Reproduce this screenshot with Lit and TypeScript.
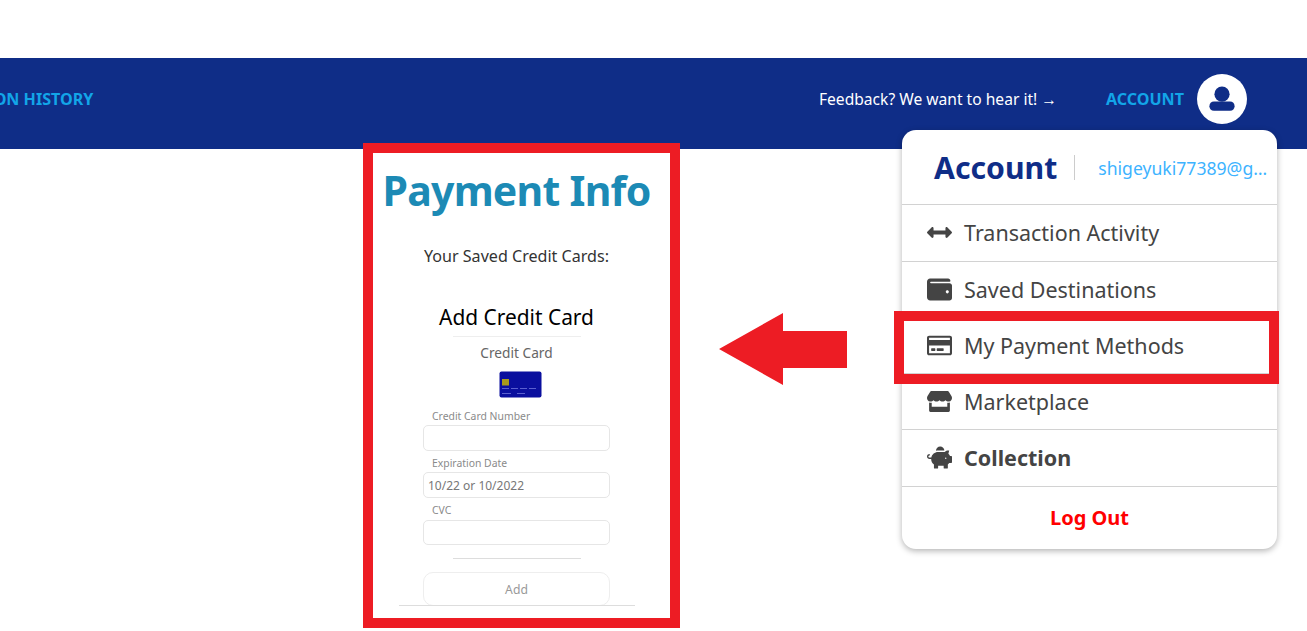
import { LitElement, html, css, svg } from "lit";
import { customElement } from "lit/decorators.js";

const icons: Record<string, { vb: string; d: string }> = {
  arrows: { vb: "0 0 512 512", d: "M377.941 169.941V216H134.059v-46.059c0-21.382-25.851-32.09-40.971-16.971L7.029 239.029c-9.373 9.373-9.373 24.568 0 33.941l86.059 86.059c15.119 15.119 40.971 4.411 40.971-16.971V296h243.882v46.059c0 21.382 25.851 32.09 40.971 16.971l86.059-86.059c9.373-9.373 9.373-24.568 0-33.941l-86.059-86.059c-15.119-15.12-40.971-4.412-40.971 16.97z" },
  wallet: { vb: "0 0 512 512", d: "M461.2 128H80c-8.84 0-16-7.16-16-16s7.16-16 16-16h384c8.84 0 16-7.16 16-16 0-26.51-21.49-48-48-48H64C28.65 32 0 60.65 0 96v320c0 35.35 28.65 64 64 64h397.2c28.02 0 50.8-21.53 50.8-48V176c0-26.47-22.78-48-50.8-48zM416 336c-17.67 0-32-14.33-32-32s14.33-32 32-32 32 14.33 32 32-14.33 32-32 32z" },
  card: { vb: "0 0 576 512", d: "M527.9 32H48.1C21.5 32 0 53.5 0 80v352c0 26.5 21.5 48 48.1 48h479.8c26.6 0 48.1-21.5 48.1-48V80c0-26.5-21.5-48-48.1-48zM54.1 80h467.8c3.3 0 6 2.7 6 6v42H48.1V86c0-3.3 2.7-6 6-6zm467.8 352H54.1c-3.3 0-6-2.7-6-6V256h479.8v170c0 3.3-2.7 6-6 6zM192 332v40c0 6.6-5.4 12-12 12h-72c-6.6 0-12-5.4-12-12v-40c0-6.6 5.4-12 12-12h72c6.6 0 12 5.4 12 12zm192 0v40c0 6.6-5.4 12-12 12H236c-6.6 0-12-5.4-12-12v-40c0-6.6 5.4-12 12-12h136c6.6 0 12 5.4 12 12z" },
  store: { vb: "0 0 616 512", d: "M602 118.6L537.1 15C531.3 5.7 521 0 510 0H106C95 0 84.7 5.7 78.9 15L14 118.6C-19.5 172.1 10.2 246.5 72.8 255c4.5.6 9.1.9 13.7.9 29.6 0 55.8-13 73.8-33.1 18 20.1 44.3 33.1 73.8 33.1 29.6 0 55.8-13 73.8-33.1 18 20.1 44.3 33.1 73.8 33.1 29.6 0 55.8-13 73.8-33.1 18.1 20.1 44.3 33.1 73.8 33.1 4.7 0 9.2-.3 13.7-.9 62.8-8.4 92.6-82.8 59-136.4zM529.5 288c-10 0-19.9-1.5-29.5-3.8V384H116v-99.8c-9.6 2.2-19.5 3.8-29.5 3.8-6 0-12.1-.4-18-1.2-5.6-.8-11.1-2.1-16.4-3.6V480c0 17.7 14.3 32 32 32h448c17.7 0 32-14.3 32-32V283.2c-5.4 1.6-10.8 2.9-16.4 3.6-6.1.8-12.1 1.2-18.2 1.2z" },
  piggy: { vb: "0 0 576 512", d: "M560 224h-29.5c-8.8-20-21.6-37.7-37.4-52.5L512 96h-32c-29.4 0-55.4 13.5-73 34.3-7.6-1.1-15.1-2.3-23-2.3H256c-77.4 0-141.9 55-156.8 128H56c-14.8 0-26.5-13.5-23.5-28.8C34.7 215.8 45.4 208 57 208h1c3.3 0 6-2.7 6-6v-20c0-3.3-2.7-6-6-6-28.5 0-53.9 20.4-57.5 48.6C-3.9 258.8 22.7 288 56 288h40c0 52.2 25.4 98.1 64 127.3V496c0 8.8 7.2 16 16 16h64c8.8 0 16-7.2 16-16v-48h128v48c0 8.8 7.2 16 16 16h64c8.8 0 16-7.2 16-16v-80.7c11.8-8.9 22.3-19.4 31.3-31.3H560c8.8 0 16-7.2 16-16V240c0-8.8-7.2-16-16-16zm-128 64c-8.8 0-16-7.2-16-16s7.2-16 16-16 16 7.2 16 16-7.2 16-16 16zM256 96h128c5.4 0 10.7.4 15.9.8 0-.3.1-.5.1-.8 0-53-43-96-96-96s-96 43-96 96c0 2.1.5 4.1.6 6.2 15.2-3.9 31-6.2 47.4-6.2z" },
};

const icon = (name: string) => html`<svg class="ico" viewBox=${icons[name].vb} aria-hidden="true"><path d=${icons[name].d}></path></svg>`;

const rows = [
  { i: "arrows", t: "Transaction Activity" },
  { i: "wallet", t: "Saved Destinations" },
  { i: "card", t: "My Payment Methods" },
  { i: "store", t: "Marketplace" },
  { i: "piggy", t: "Collection", bold: true },
];

@customElement("app-root")
export class AppRoot extends LitElement {
  static styles = css`
    :host {
      display: block;
      position: relative;
      width: 100%;
      height: 631px;
      overflow: hidden;
      background: #fff;
      font-family: "Noto Sans", "Open Sans", sans-serif;
      color: #3d3d3d;
    }
    .top { height: 58px; }
    .nav {
      box-sizing: border-box;
      height: 91px;
      background: #0f2d87;
      display: flex;
      align-items: center;
      padding: 0 60px 10px 0;
    }
    .hist {
      margin-left: -96px;
      margin-right: auto;
      font-size: 16.1px;
      font-weight: 700;
      color: #12a5e8;
      white-space: nowrap;
    }
    .feedback { color: #fff; font-size: 15.6px; margin-right: 49px; white-space: nowrap; }
    .acct { color: #12a5e8; font-size: 16.1px; font-weight: 700; margin-right: 13px; }
    .avatar {
      width: 50px; height: 50px; border-radius: 50%; background: #fff;
      display: flex; align-items: center; justify-content: center;
    }
    .avatar svg { width: 26px; height: 26px; fill: #0f2d87; }
    .main { display: flex; padding-left: 363px; margin-top: -6px; position: relative; }
    .pay {
      box-sizing: border-box;
      width: 317px; height: 485px;
      border: 10px solid #ed1c24;
      background: #fff;
      display: flex; flex-direction: column; align-items: center;
      padding-right: 10px;
      position: relative;
    }
    h1 {
      margin: 10px 0 0; font-size: 41px; line-height: 54px; font-weight: 700; color: #1c8ab5;
      white-space: nowrap; letter-spacing: -0.75px; font-family: "Noto Sans", sans-serif;
    }
    .saved { margin-top: 28px; font-size: 16.1px; line-height: 22px; color: #333; }
    .addt { margin-top: 35px; font-size: 20.9px; line-height: 30px; color: #000; }
    .rule { width: 128px; height: 1px; background: #eee; margin-top: 4px; flex: none; }
    .cc { margin-top: 6px; font-size: 13.7px; line-height: 20px; color: #666; }
    .cardimg { margin: 8px 0 0 8px; width: 43px; height: 27px; flex: none; display: block; }
    .field { width: 187px; display: flex; flex-direction: column; }
    .field label { font-size: 10.4px; line-height: 14px; color: #8a8a8a; padding-left: 9px; margin-bottom: 2px; }
    .input {
      box-sizing: border-box; height: 26px;
      border: 1px solid #e6e6e6; border-radius: 5px;
      font-size: 12px; line-height: 25px; color: #777; padding-left: 4px;
    }
    .f1 { margin-top: 11px; }
    .f2, .f3 { margin-top: 5px; }
    .f3 .input { height: 25px; }
    .f3 label { margin-bottom: 3px; }
    .rule2 { width: 128px; height: 1px; background: #ddd; margin-top: 13px; flex: none; }
    .add {
      box-sizing: border-box; width: 187px; height: 34px; margin-top: 13px; flex: none;
      border: 1px solid #eee; border-radius: 10px;
      display: flex; align-items: center; justify-content: center;
      font-size: 12.2px; color: #999;
    }
    .rule3 { width: 236px; height: 1px; background: #ddd; margin-top: -1px; flex: none; }

    .menu {
      position: absolute; left: 902px; top: 130px; width: 375px; height: 419px;
      box-sizing: border-box;
      background: #fff; border-radius: 14px;
      box-shadow: 0 2px 6px rgba(0,0,0,.3);
      display: flex; flex-direction: column;
    }
    .mh { height: 74px; flex: none; display: flex; align-items: center; box-sizing: border-box; padding-left: 32px; }
    .mh b { font-size: 30.2px; font-weight: 700; color: #0f2d87; white-space: nowrap; }
    .sep { width: 1px; height: 25px; background: #ccc; margin: 0 23px 0 17px; flex: none; }
    .mail {
      color: #3db3ff; font-size: 17.6px; min-width: 0; flex: 1; margin-right: 7px; padding-top: 2px;
      white-space: nowrap; overflow: hidden; text-overflow: ellipsis;
    }
    .row {
      box-sizing: border-box; height: 56px; flex: none;
      border-top: 1px solid #d2d2d2;
      display: flex; align-items: center; padding-left: 25px;
      font-size: 21.5px; color: #444; white-space: nowrap;
    }
    .mh + .row, .row.bold { height: 57px; padding-bottom: 1px; }
    .row.bold { font-weight: 700; }
    .ico { width: 25px; height: 25px; fill: #444; flex: none; margin-right: 12px; }
    .out {
      flex: 1; border-top: 1px solid #d2d2d2; padding-bottom: 1px;
      display: flex; align-items: center; justify-content: center;
      color: #f00; font-weight: 700; font-size: 20px;
    }
    .hl {
      position: absolute; left: 894px; top: 311px; width: 385px; height: 73px;
      box-sizing: border-box; border: 10px solid #ed1c24; pointer-events: none;
    }
    .arrow { position: absolute; left: 719px; top: 313px; width: 128px; height: 72px; fill: #ed1c24; }
  `;

  render() {
    return html`
      <div class="top"></div>
      <nav class="nav">
        <span class="hist">TRANSACTION HISTORY</span>
        <span class="feedback">Feedback? We want to hear it! →</span>
        <span class="acct">ACCOUNT</span>
        <span class="avatar">
          <svg viewBox="0 0 26 26"><circle cx="13" cy="8.2" r="7.6"></circle><path d="M5 15.6h16c2.8 0 4.6 2 4.6 4.6 0 2.6-1.8 4.6-4.6 4.6H5c-2.8 0-4.6-2-4.6-4.6 0-2.6 1.8-4.6 4.6-4.6z"></path></svg>
        </span>
      </nav>
      <div class="main">
        <section class="pay">
          <h1>Payment Info</h1>
          <div class="saved">Your Saved Credit Cards:</div>
          <div class="addt">Add Credit Card</div>
          <div class="rule"></div>
          <div class="cc">Credit Card</div>
          <svg class="cardimg" viewBox="0 0 43 27">
            <rect x=".5" y=".5" width="42" height="26" rx="2" fill="#0a0f9e"></rect>
            <rect x="3" y="8" width="7" height="6.5" fill="#a89a1c"></rect>
            ${svg`<g fill="#5a5fd0"><rect x="3" y="17" width="7" height="1"></rect><rect x="12" y="17" width="7" height="1"></rect><rect x="21" y="17" width="7" height="1"></rect><rect x="30" y="17" width="7" height="1"></rect><rect x="3" y="22" width="9" height="1"></rect><rect x="18" y="22" width="8" height="1"></rect></g>`}
          </svg>
          <div class="field f1"><label>Credit Card Number</label><div class="input"></div></div>
          <div class="field f2"><label>Expiration Date</label><div class="input">10/22 or 10/2022</div></div>
          <div class="field f3"><label>CVC</label><div class="input"></div></div>
          <div class="rule2"></div>
          <div class="add">Add</div>
          <div class="rule3"></div>
        </section>
      </div>
      <svg class="arrow" viewBox="0 0 128 72"><polygon points="0,36 64,0 64,18 128,18 128,55 64,55 64,72"></polygon></svg>
      <aside class="menu">
        <div class="mh"><b>Account</b><span class="sep"></span><span class="mail">shigeyuki77389@gmail.com</span></div>
        ${rows.map((r) => html`<div class="row ${r.bold ? "bold" : ""}">${icon(r.i)}<span>${r.t}</span></div>`)}
        <div class="out">Log Out</div>
      </aside>
      <div class="hl"></div>
    `;
  }
}
